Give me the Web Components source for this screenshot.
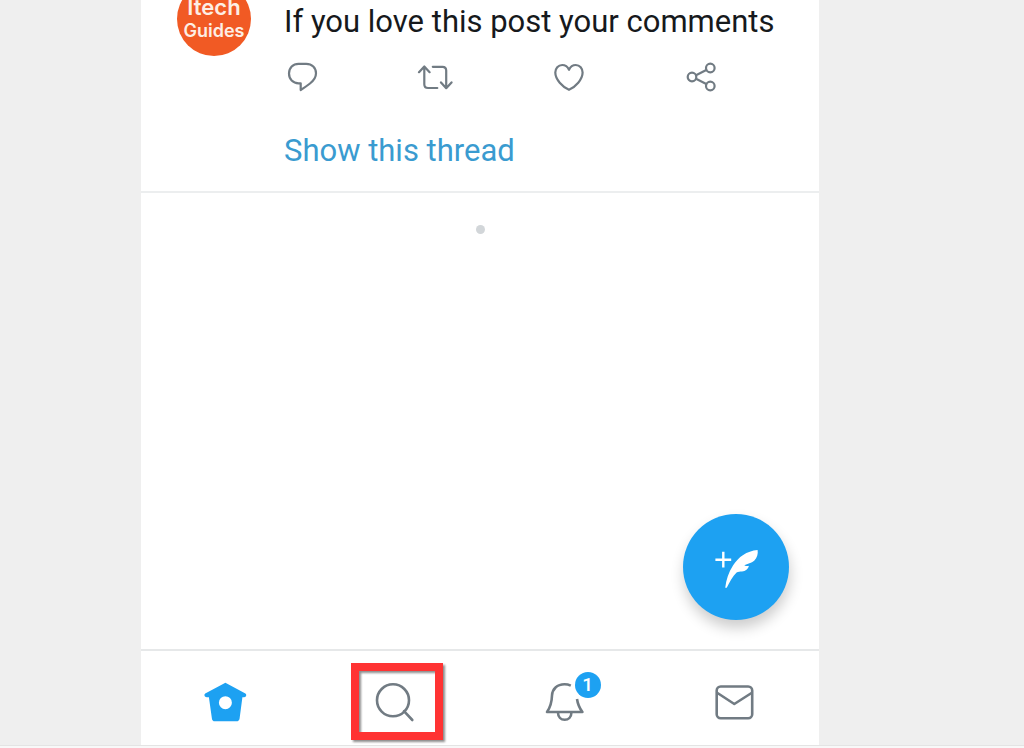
<!DOCTYPE html>
<html lang="en">
<head>
<meta charset="utf-8">
<meta name="viewport" content="width=device-width, initial-scale=1">
<title>Timeline</title>
<style>
    body {
        margin: 0;
        background: #efefef;
        font-family: Roboto, sans-serif;
        --accent: #1da1f2;
        --icon: #717b83;
        --line: #e6e8e9;
    }
</style>
</head>
<body>

<phone-screen>
    <tweet-card>
        <user-avatar slot="avatar"></user-avatar>
        If you love this post your comments
        <tweet-actions slot="actions"></tweet-actions>
        <thread-link slot="thread" href="#thread">Show this thread</thread-link>
    </tweet-card>
    <timeline-end></timeline-end>
    <compose-button slot="floating"></compose-button>
    <tab-bar slot="tabs">
        <tab-item label="Home" href="#home">
            <svg width="48" height="48" viewBox="0 0 48 48">
                <path fill="#1da1f2" fill-rule="evenodd" d="M23.4 4.8 43.4 15.6C44.8 16.6 44.4 19.2 42.2 19.2H40.4L37.6 40.4Q37.2 43.2 34.4 43.2H12.8Q10.2 43.2 9.9 40.4L6.9 19.2H4.8C2.4 19.2 1.8 16.600 3.200 15.600ZM23.400 18.200a6.500 6.500 0 1 0 0 13a6.500 6.500 0 1 0 0-13Z"/>
            </svg>
        </tab-item>
        <tab-item label="Search" href="#search" highlighted>
            <svg width="48" height="48" viewBox="0 0 48 48" fill="none" stroke="#717b83" stroke-width="2.6" stroke-linecap="round">
                <circle cx="22" cy="22.3" r="16"/>
                <path d="M33 33.200 41.300 42"/>
            </svg>
        </tab-item>
        <tab-item label="Notifications" href="#notifications" count="1">
            <svg width="48" height="48" viewBox="0 0 48 48" fill="none" stroke="#717b83" stroke-width="2.6">
                <path d="M29.8 7.6C27.5 6.6 25.5 6.3 23.5 6.3C16 6.300 11.300 11 11 17.500C10.800 25 9.500 29 6 34H41.400C38 29.500 36.800 26.500 36 21" stroke-linejoin="round"/>
                <path d="M17 34.500C17 39 20 41.800 23.700 41.800S30.400 39 30.400 34.500"/>
            </svg>
        </tab-item>
        <tab-item label="Messages" href="#messages">
            <svg width="48" height="48" viewBox="0 0 48 48" fill="none" stroke="#717b83" stroke-width="2.6" stroke-linejoin="round">
                <rect x="6.7" y="8.5" width="35.5" height="31.8" rx="4"/>
                <path d="M7.500 15 24.300 26 41.500 15"/>
            </svg>
        </tab-item>
    </tab-bar>
</phone-screen>

<template id="phone-screen">
    <style>
        :host {
            display: flex;
            flex-direction: column;
            min-height: 100vh;
        }

        .page {
            flex: 1;
            display: grid;
            grid-template-columns: 141fr 678fr 205fr;
        }

        .screen {
            grid-column: 2;
            display: flex;
            flex-direction: column;
            background: #fff;
            overflow: hidden;
        }

        .content {
            flex: 1;
            position: relative;
        }

        .floating {
            position: absolute;
            right: 30px;
            bottom: 29px;
        }

        .edge {
            height: 2px;
            border-top: 1px solid #e4e4e4;
            background: #f8f8f8;
        }
    </style>
    <div class="page">
        <main class="screen">
            <div class="content">
                <slot></slot>
                <div class="floating"><slot name="floating"></slot></div>
            </div>
            <slot name="tabs"></slot>
        </main>
    </div>
    <div class="edge"></div>
</template>

<template id="tweet-card">
    <style>
        :host {
            display: block;
            border-bottom: 2px solid #eceeef;
        }

        .tweet {
            display: grid;
            grid-template-columns: 74px 1fr;
            column-gap: 33px;
            padding: 0 2px 20px 36px;
        }

        .text {
            margin: 0;
            padding-top: 2px;
            color: #16191c;
            font-size: 31px;
            line-height: 40px;
        }

        .actions {
            padding: 17px 0 36px;
        }
    </style>
    <article class="tweet">
        <slot name="avatar"></slot>
        <div>
            <p class="text"><slot></slot></p>
            <div class="actions"><slot name="actions"></slot></div>
            <slot name="thread"></slot>
        </div>
    </article>
</template>

<template id="user-avatar">
    <style>
        /* the feed is scrolled, so the top of the picture is cut off */
        :host {
            display: flex;
            flex-direction: column;
            align-items: center;
            justify-content: center;
            width: 74px;
            height: 74px;
            margin-top: -18px;
            border-radius: 50%;
            background: #f15a24;
            color: #fdeee4;
            font-family: Inter, sans-serif;
            font-weight: 600;
            line-height: 23px;
        }

        .top {
            font-size: 22px;
        }

        .bottom {
            font-size: 18px;
        }
    </style>
    <span class="top">Itech</span>
    <span class="bottom">Guides</span>
</template>

<template id="tweet-actions">
    <style>
        :host {
            display: grid;
            grid-template-columns: repeat(4, 1fr);
        }

        button {
            display: block;
            width: 36px;
            height: 36px;
            padding: 0;
            border: 0;
            background: none;
            cursor: pointer;
        }

        svg {
            display: block;
            fill: none;
            stroke: var(--icon);
            stroke-width: 2.2;
            stroke-linecap: round;
            stroke-linejoin: round;
        }
    </style>
    <button type="button" aria-label="Reply">
        <svg width="36" height="36" viewBox="0 0 36 36">
            <path d="M14.5 4.8H22.2C28 4.8 32 9 32 14.3C32 18.4 29.6 21.7 26 24.5C23 26.8 20 29 16.7 31V24.300H14.500C9 24.300 5 20.200 5 14.600S9 4.800 14.500 4.800Z"/>
        </svg>
    </button>
    <button type="button" aria-label="Retweet">
        <svg width="36" height="36" viewBox="0 0 36 36">
            <path d="M2 13.2 7.3 7.5 12.6 13.2M7.3 8V25.2Q7.3 29 11 29H20.3M15.8 7.800H25.500Q29.200 7.800 29.200 11.500V28.700M24 23.400 29.200 29.200 34.500 23.400"/>
        </svg>
    </button>
    <button type="button" aria-label="Like">
        <svg width="36" height="36" viewBox="0 0 36 36">
            <path d="M18 10.8C16.6 7.7 14 6 11.2 6C7.2 6 4.3 9.3 4.3 13.6C4.3 20.5 11.5 28 18 30.8C24.500 28 31.600 20.500 31.600 13.600C31.600 9.300 28.800 6 24.800 6C22 6 19.400 7.700 18 10.800Z"/>
        </svg>
    </button>
    <button type="button" aria-label="Share">
        <svg width="36" height="36" viewBox="0 0 36 36">
            <circle cx="8" cy="18" r="4.3"/>
            <circle cx="26.3" cy="9" r="4.3"/>
            <circle cx="26.3" cy="27" r="4.3"/>
            <path d="M12 16.200 22.300 11M12 19.800 22.300 25"/>
        </svg>
    </button>
</template>

<template id="thread-link">
    <style>
        :host {
            display: block;
        }

        a {
            color: #3a9bd0;
            font-size: 31px;
            line-height: 40px;
            text-decoration: none;
        }
    </style>
    <a><slot></slot></a>
</template>

<template id="timeline-end">
    <style>
        :host {
            display: flex;
            justify-content: center;
            padding: 32px;
        }

        .dot {
            width: 9px;
            height: 9px;
            border-radius: 50%;
            background: #d2d6d9;
        }
    </style>
    <span class="dot"></span>
</template>

<template id="compose-button">
    <style>
        :host {
            display: block;
        }

        button {
            display: block;
            width: 106px;
            height: 106px;
            padding: 0;
            border: 0;
            border-radius: 50%;
            background: var(--accent);
            box-shadow: 1px 8px 14px rgba(0, 0, 0, .2);
            cursor: pointer;
        }

        svg {
            display: block;
        }
    </style>
    <button type="button" aria-label="Compose">
        <svg width="106" height="106" viewBox="0 0 106 106">
            <path d="M40.3 37.8V53.6M32.4 45.7H48.2" stroke="#fff" stroke-width="2.4"/>
            <path fill="#fff" d="M42.3 73.2C43.2 66 45.5 58.5 50 51.5C55.5 43 63.5 37 74.6 36C75.2 39.5 74.3 43.8 71.2 46.8C68.600 49.300 64.500 49.800 61.300 51.200C63 52.200 64.600 52.300 66 51.800C65.200 55.300 62.500 57.200 59 57.500C57 57.700 55.200 57.600 53.600 58.400C49.500 62.500 46.500 68 44 73.300C43.500 74.200 42.200 74.200 42.300 73.200Z"/>
        </svg>
    </button>
</template>

<template id="tab-bar">
    <style>
        nav {
            display: grid;
            grid-template-columns: repeat(4, 1fr);
            padding: 12px 0 5px;
            border-top: 2px solid var(--line);
            background: #fff;
        }
    </style>
    <nav><slot></slot></nav>
</template>

<template id="tab-item">
    <style>
        :host {
            display: flex;
            justify-content: center;
        }

        a {
            display: flex;
            align-items: center;
            justify-content: center;
            box-sizing: border-box;
            position: relative;
            width: 92px;
            height: 77px;
            text-decoration: none;
        }

        .frame {
            display: none;
            position: absolute;
            inset: 0 -2px 0 2px;
            border: 8px solid #ff3333;
            filter: drop-shadow(2px 2px 1px rgba(0, 0, 0, .45));
        }

        :host([highlighted]) .frame {
            display: block;
        }

        .badge {
            position: absolute;
            top: 9px;
            right: 10px;
            width: 26px;
            border-radius: 50%;
            background: var(--accent);
            color: #fff;
            font-size: 19px;
            font-weight: 500;
            line-height: 26px;
            text-align: center;
        }

        .badge:empty {
            display: none;
        }
    </style>
    <a>
        <slot></slot>
        <span class="badge"></span>
        <span class="frame"></span>
    </a>
</template>

<script>
    class BaseElement extends HTMLElement {
        constructor() {
            super();
            const template = document.getElementById(this.localName);
            const shadowRoot = this.attachShadow({ mode: 'open' });
            shadowRoot.appendChild(template.content.cloneNode(true));
        }
    }

    class ThreadLink extends BaseElement {
        connectedCallback() {
            this.shadowRoot.querySelector('a').href = this.getAttribute('href');
        }
    }

    class TabItem extends BaseElement {
        connectedCallback() {
            const link = this.shadowRoot.querySelector('a');
            link.href = this.getAttribute('href');
            link.setAttribute('aria-label', this.getAttribute('label'));
            this.shadowRoot.querySelector('.badge').textContent = this.getAttribute('count') || '';
        }
    }

    customElements.define('phone-screen', class extends BaseElement {});
    customElements.define('tweet-card', class extends BaseElement {});
    customElements.define('user-avatar', class extends BaseElement {});
    customElements.define('tweet-actions', class extends BaseElement {});
    customElements.define('thread-link', ThreadLink);
    customElements.define('timeline-end', class extends BaseElement {});
    customElements.define('compose-button', class extends BaseElement {});
    customElements.define('tab-bar', class extends BaseElement {});
    customElements.define('tab-item', TabItem);
</script>
</body>
</html>
